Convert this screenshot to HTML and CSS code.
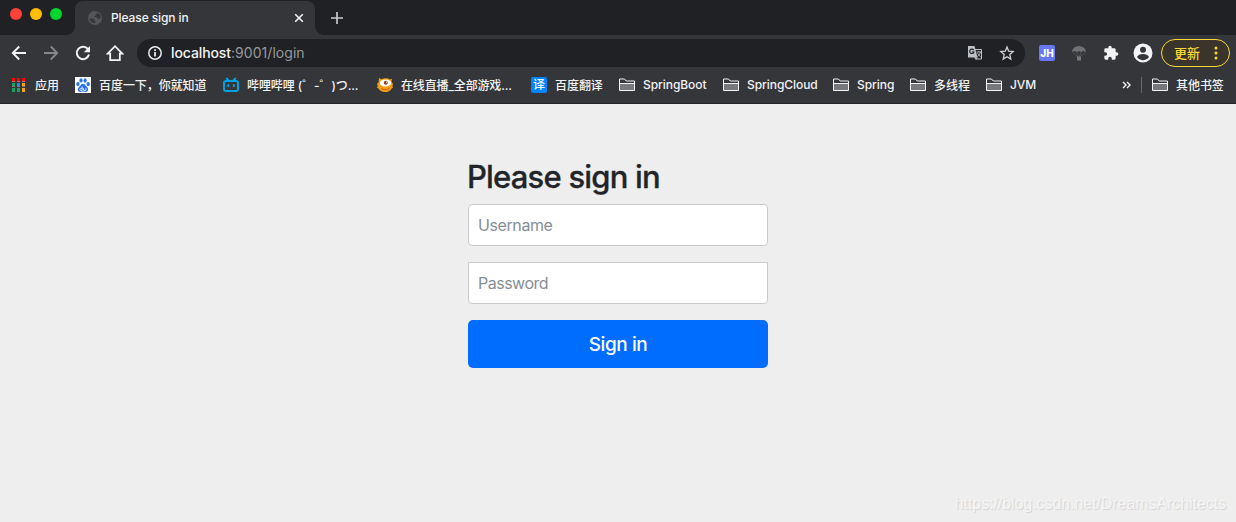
FILE: index.html
```html
<!DOCTYPE html>
<html lang="zh-CN">
<head>
    <meta charset="UTF-8">
    <meta name="viewport" content="width=device-width, initial-scale=1.0">
    <title>Please sign in</title>
    <link rel="stylesheet" href="styles.css">
</head>
<body>
    <svg class="defs">
        <symbol id="folder" viewBox="0 0 16 14">
            <path d="M1 5h14v8H1z" fill="#77787b"/>
            <path d="M.5 12.5V1h5l1.700 2h8.300v9.500zM.5 5.500h15" fill="none" stroke="#f1f3f4"/>
        </symbol>
    </svg>

    <header>
        <div class="tabbar">
            <div class="lights">
                <span class="light red"></span>
                <span class="light yellow"></span>
                <span class="light green"></span>
            </div>
            <div class="tab">
                <svg width="14" height="14" viewBox="0 0 14 14">
                    <circle cx="7" cy="7" r="7" fill="#55565a"/>
                    <path d="M1.200 7.300l3.600.1 1.700 1.400.2 1.300 1.200.7-1 1.500-2.500-.5-2.200-1.800zM6.200 1.200l3.100.2.2 1.200-1.600.7-.3 1.300-1.500.5.9 1.200 2 .2.7 1.200 2.600.2.3-3.200-1.600-2.300z" fill="#35363a"/>
                </svg>
                <span class="tab-title">Please sign in</span>
                <svg class="tab-close" width="10" height="10" viewBox="0 0 10 10"><path d="M1.200 1.200l7.600 7.600M8.800 1.200L1.200 8.800" stroke="#f1f3f4" stroke-width="1.600"/></svg>
            </div>
            <svg class="new-tab" width="12" height="12" viewBox="0 0 12 12"><path d="M6 0v12M0 6h12" stroke="#c6c7c9" stroke-width="1.700"/></svg>
        </div>

        <div class="toolbar">
            <div class="nav">
                <svg width="16" height="16" viewBox="0 0 16 16"><path d="M15 8H2M8.200 1.500L1.800 8l6.400 6.500" fill="none" stroke="#f1f3f4" stroke-width="1.900"/></svg>
                <svg width="16" height="16" viewBox="0 0 16 16"><path d="M1 8h13M7.800 1.500L14.200 8l-6.400 6.500" fill="none" stroke="#86878a" stroke-width="1.900"/></svg>
                <svg width="16" height="16" viewBox="0 0 16 16"><path d="M13 4.200A6.200 6.200 0 1 0 14 9.600" fill="none" stroke="#f1f3f4" stroke-width="2"/><path d="M15 1v6.200H8.800z" fill="#f1f3f4"/></svg>
                <svg width="18" height="18" viewBox="0 0 18 18"><path d="M1.700 9.600L9 2.200l7.300 7.400h-2.500v6.500H4.200V9.600z" fill="none" stroke="#f1f3f4" stroke-width="1.800"/></svg>
            </div>
            <div class="address">
                <svg width="14" height="14" viewBox="0 0 14 14"><circle cx="7" cy="7" r="6.200" fill="none" stroke="#e8eaed" stroke-width="1.500"/><path d="M7 6v4.600M7 3.200v1.700" stroke="#e8eaed" stroke-width="1.800"/></svg>
                <span class="url"><span class="host">localhost</span><span class="path">:9001/login</span></span>
                <svg class="translate" width="16" height="16" viewBox="0 0 16 16">
                    <path d="M6 4.500h8.500v9.500H8.500z" fill="#202124" stroke="#bdc1c6"/>
                    <path d="M1 1h6.500l3 11.500H1z" fill="#bdc1c6"/>
                    <path d="M8.500 12.500l.3 2.500 2-2.500z" fill="#bdc1c6"/>
                    <path d="M6.700 5.100A2.200 2.200 0 1 0 7 7H4.800" fill="none" stroke="#202124" stroke-width="1.100"/>
                    <path d="M9.500 7h5M12 6v1M13.500 7c-.4 2-1.700 3.500-3.100 4.500M10.600 8.200c.6 1.500 1.700 2.700 3 3.500" fill="none" stroke="#bdc1c6" stroke-width=".9"/>
                </svg>
                <svg width="16" height="16" viewBox="0 0 16 16"><path d="M8 2l1.700 4.200 4.500.4-3.400 3 1 4.500L8 11.700l-3.800 2.400 1-4.500-3.400-3 4.500-.4z" fill="none" stroke="#d0d2d5" stroke-width="1.300"/></svg>
            </div>
            <div class="extensions">
                <span class="jh">JH</span>
                <svg width="16" height="16" viewBox="0 0 16 16"><path d="M1 7a7 6 0 0 1 14 0L12.500 6 10 7 8 6 6 7 3.500 6z" fill="#707174"/><path d="M1.500 7L7 12M14.500 7L9 12M6 7l1.500 5M10 7l-1.500 5" stroke="#5c5d60" stroke-width=".7"/><path d="M6 11.500h4v4H6z" fill="#77787b"/></svg>
                <svg width="16" height="16" viewBox="0 0 24 24"><path d="M20.500 11H19V7a2 2 0 0 0-2-2h-4V3.500a2.500 2.500 0 0 0-5 0V5H4a2 2 0 0 0-2 2v3.800h1.500a2.700 2.700 0 0 1 0 5.400H2V20a2 2 0 0 0 2 2h3.800v-1.500a2.700 2.700 0 0 1 5.400 0V22H17a2 2 0 0 0 2-2v-4h1.500a2.500 2.500 0 0 0 0-5z" fill="#f1f3f4"/></svg>
                <svg width="20" height="20" viewBox="0 0 20 20"><circle cx="10" cy="10" r="9.500" fill="#f1f3f4"/><circle cx="10" cy="6.700" r="3" fill="#35363a"/><path d="M4 14c1.500-4 10.500-4 12 0-2.800 4.200-9.200 4.200-12 0z" fill="#35363a"/></svg>
            </div>
            <div class="update">
                <span>更新</span>
                <svg width="4" height="14" viewBox="0 0 4 14" fill="#fdd835"><circle cx="2" cy="2" r="1.500"/><circle cx="2" cy="7" r="1.500"/><circle cx="2" cy="12" r="1.500"/></svg>
            </div>
        </div>

        <div class="bookmarks">
            <div class="bookmark">
                <svg width="16" height="16" viewBox="0 0 16 16">
                    <path d="M1 1h3v3H1zM6 1h3v3H6zM11 1h3v3h-3z" fill="#f00"/>
                    <path d="M1 4.500h3M6 4.500h3M11 4.500h3" stroke="#bd7370"/>
                    <path d="M1 6h3v3H1zM1 11h3v4H1zM6 11h3v4H6z" fill="#13a561"/>
                    <path d="M6 6h3v3H6z" fill="#1a8cff"/>
                    <path d="M11 6h3v3h-3zM11 11h3v4h-3z" fill="#ffa400"/>
                    <path d="M1 9.500h3M6 9.500h3M11 9.500h3" stroke="#777"/>
                </svg>
                <span>应用</span>
            </div>
            <div class="bookmark">
                <svg width="16" height="16" viewBox="0 0 16 16">
                    <path d="M0 0h16v16H0z" fill="#fff"/>
                    <g fill="#2673f0"><ellipse cx="2.900" cy="7.100" rx="1.700" ry="2.100"/><ellipse cx="6" cy="3.400" rx="1.600" ry="2.200"/><ellipse cx="10.100" cy="3.400" rx="1.600" ry="2.200"/><ellipse cx="13.200" cy="7.100" rx="1.700" ry="2.100"/><path d="M8 6.700c2 0 2.500 2 4 3.200 1.800 1.600 1.500 5-1.300 5-1 0-1.700-.3-2.700-.3s-1.700.3-2.700.3c-2.800 0-3.100-3.400-1.300-5C5.500 8.700 6 6.700 8 6.700z"/></g>
                    <path d="M7.200 9.500v4H5.800c-1.300 0-1.300-2.200 0-2.200h1.400M8.600 11.200v2.200h2.300v-2.200" fill="none" stroke="#fff" stroke-width=".8"/>
                </svg>
                <span>百度一下，你就知道</span>
            </div>
            <div class="bookmark">
                <svg width="16" height="16" viewBox="0 0 16 16" fill="none" stroke="#00a1e0" stroke-width="2" stroke-linecap="round"><rect x="1" y="4" width="14" height="10" rx="2"/><path d="M3.700 1.500L5.500 3.500M12.300 1.500L10.500 3.500M5.200 8v1.200M10.800 8v1.200"/></svg>
                <span class="bili">哔哩哔哩 (゜-゜)つ...</span>
            </div>
            <div class="bookmark">
                <svg width="16" height="16" viewBox="0 0 16 16">
                    <path d="M2 1l2.500 1.200C7 .7 11 .9 13 2.500l2-.8-.5 3L16 7l-.6 2 .6 1.500-1.300.9C12.500 16.200 3.500 16.200 1.500 11.600L0 10.700l.7-2L0 7l1.600-1.800z" fill="#f59b16"/>
                    <ellipse cx="8.500" cy="6" rx="5.700" ry="3.600" fill="#fff"/><circle cx="8.800" cy="5.700" r="2" fill="#8a4526"/><circle cx="9.600" cy="5.200" r=".6" fill="#fff"/>
                    <path d="M4 11.500c2.500 1.500 6 1.500 8.500 0" fill="none" stroke="#c46a0c"/>
                </svg>
                <span class="live">在线直播_全部游戏...</span>
            </div>
            <div class="bookmark"><b class="fanyi">译</b><span>百度翻译</span></div>
            <div class="bookmark"><svg width="16" height="14"><use href="#folder"/></svg><span>SpringBoot</span></div>
            <div class="bookmark"><svg width="16" height="14"><use href="#folder"/></svg><span>SpringCloud</span></div>
            <div class="bookmark"><svg width="16" height="14"><use href="#folder"/></svg><span>Spring</span></div>
            <div class="bookmark"><svg width="16" height="14"><use href="#folder"/></svg><span>多线程</span></div>
            <div class="bookmark"><svg width="16" height="14"><use href="#folder"/></svg><span>JVM</span></div>
            <svg class="more" width="9" height="8" viewBox="0 0 9 8"><path d="M1 1l3 3-3 3M5 1l3 3-3 3" fill="none" stroke="#f1f3f4" stroke-width="1.400"/></svg>
            <div class="bookmark other"><svg width="16" height="14"><use href="#folder"/></svg><span>其他书签</span></div>
        </div>
    </header>

    <main>
        <form class="form-signin">
            <h2>Please sign in</h2>
            <input type="text" class="username" placeholder="Username">
            <input type="password" class="password" placeholder="Password">
            <button type="submit">Sign in</button>
        </form>
        <div class="watermark">https://blog.csdn.net/DreamsArchitects</div>
    </main>
</body>
</html>
```

FILE: styles.css
```css
* {
    box-sizing: border-box;
}
body {
    margin: 0;
    height: 522px;
    overflow: hidden;
    display: flex;
    flex-direction: column;
    background-color: #eee;
    font-family: Inter, "Noto Sans CJK SC", sans-serif;
}
svg {
    display: block;
    flex-shrink: 0;
}
.defs {
    position: absolute;
    width: 0;
    height: 0;
}
header {
    height: 104px;
    background-color: #35363a;
    border-bottom: 1px solid #242529;
    color: #f1f3f4;
}

/* tabs */
.tabbar {
    display: flex;
    height: 35px;
    background-color: #202124;
}
.lights {
    display: flex;
    gap: 8px;
    width: 75px;
    padding: 8px 0 0 10px;
}
.light {
    width: 12px;
    height: 12px;
    border-radius: 50%;
}
.red {
    background-color: #ff4238;
}
.yellow {
    background-color: #ffbd00;
}
.green {
    background-color: #00d62e;
}
.tab {
    position: relative;
    display: flex;
    align-items: center;
    width: 240px;
    height: 34px;
    margin-top: 1px;
    padding: 0 11px 0 13px;
    border-radius: 8px 8px 0 0;
    background-color: #35363a;
}
.tab::before,
.tab::after {
    content: "";
    position: absolute;
    bottom: 0;
    width: 8px;
    height: 8px;
}
.tab::before {
    left: -8px;
    background: radial-gradient(circle at 0 0, transparent 7.5px, #35363a 8px);
}
.tab::after {
    right: -8px;
    background: radial-gradient(circle at 100% 0, transparent 7.5px, #35363a 8px);
}
.tab-title {
    margin: -1px 0 0 9px;
    font-size: 12px;
    font-weight: 500;
    letter-spacing: -0.1px;
}
.tab-close {
    margin-left: auto;
}
.new-tab {
    margin: 12px 0 0 16px;
}

/* address bar */
.toolbar {
    display: flex;
    align-items: center;
    height: 36px;
    padding: 0 6px 0 11px;
}
.nav {
    display: flex;
    align-items: center;
    gap: 16px;
    width: 126px;
}
.nav svg:last-child {
    margin-left: -1px;
}
.address {
    display: flex;
    align-items: center;
    width: 888px;
    height: 28px;
    padding: 0 10px 0 11px;
    border-radius: 14px;
    background-color: #202124;
}
.url {
    margin: -1px 0 0 9px;
    font-size: 14px;
}
.host {
    font-weight: 500;
    letter-spacing: -0.1px;
}
.path {
    color: #96989b;
    letter-spacing: 0.05px;
}
.translate {
    margin: 0 16px 0 auto;
}
.extensions {
    display: flex;
    align-items: center;
    gap: 16px;
    margin-left: 14px;
}
.extensions svg:last-child {
    margin-left: -2px;
}
.jh {
    width: 16px;
    height: 16px;
    border-radius: 2px;
    background-color: #6678f2;
    color: #fff;
    font-size: 10px;
    font-weight: 800;
    line-height: 16px;
    text-align: center;
}
.update {
    display: flex;
    align-items: center;
    justify-content: space-between;
    width: 69px;
    height: 28px;
    margin-left: auto;
    padding: 0 11px 0 12px;
    border: 1px solid #fdd835;
    border-radius: 14px;
    background-color: #3a352a;
    color: #fdd835;
    font-size: 13px;
    font-weight: 500;
}
.update span {
    margin-top: -2px;
}

/* bookmarks */
.bookmarks {
    display: grid;
    grid-template-columns: 64px 148px 154px 154px 88px 104px 110px 77px 76px 1fr 19px 95px;
    align-items: center;
    height: 28px;
    padding-left: 11px;
    font-size: 12px;
    font-weight: 500;
    white-space: nowrap;
}
.bookmark {
    display: flex;
    align-items: center;
    gap: 8px;
    height: 18px;
    letter-spacing: -0.06px;
}
.bookmark span {
    margin-top: -2px;
}
.bookmark .bili {
    letter-spacing: -0.08px;
}
.bookmark .live {
    letter-spacing: -0.15px;
}
.fanyi {
    width: 16px;
    height: 16px;
    border-radius: 2px;
    background-color: #0084ff;
    font-size: 12px;
    font-weight: 500;
    line-height: 15px;
    text-align: center;
}
.other {
    height: 16px;
    padding-left: 10px;
    border-left: 1px solid #68696d;
}

/* login form */
main {
    position: relative;
    flex: 1;
}
.form-signin {
    display: flex;
    flex-direction: column;
    width: 300px;
    margin: 0 auto;
    padding-top: 54px;
}
h2 {
    margin: 0 0 8px -1px;
    color: #212529;
    font-size: 31px;
    font-weight: 500;
    line-height: 38px;
    letter-spacing: -0.8px;
    -webkit-text-stroke: 0.3px #212529;
}
input {
    height: 42px;
    margin: 0 0 16px;
    padding: 0 9px;
    border: 1px solid #c8cacc;
    border-radius: 4px;
    background-color: #fff;
    font-family: inherit;
    font-size: 16px;
    letter-spacing: -0.4px;
}
input::placeholder {
    color: #868e96;
}
.password {
    border-radius: 0 0 4px 4px;
    letter-spacing: -0.5px;
}
button {
    height: 48px;
    padding: 0;
    border: none;
    border-radius: 5px;
    background-color: #006dff;
    color: #fff;
    font-family: inherit;
    font-size: 19px;
    font-weight: 500;
    letter-spacing: -0.4px;
    cursor: pointer;
}
.watermark {
    position: absolute;
    right: 10px;
    bottom: 9px;
    color: #f5f5f5;
    font-family: "Liberation Sans", sans-serif;
    font-size: 16px;
    letter-spacing: -0.07px;
    text-shadow: 1px 1px 1px #d2d2d2;
}
```
